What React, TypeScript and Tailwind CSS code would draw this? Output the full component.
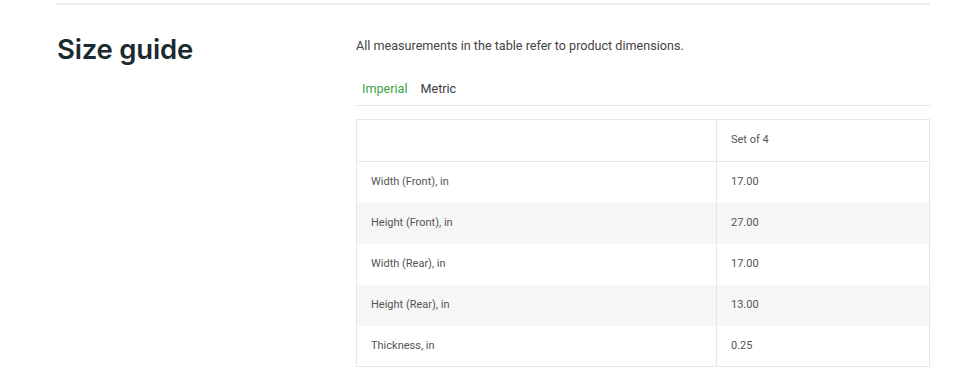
const rows = [
  { label: "Width (Front), in", value: "17.00" },
  { label: "Height (Front), in", value: "27.00" },
  { label: "Width (Rear), in", value: "17.00" },
  { label: "Height (Rear), in", value: "13.00" },
  { label: "Thickness, in", value: "0.25" },
];

export default function App() {
  return (
    <div className="w-[960px] h-[385px] bg-white font-['Roboto',sans-serif] overflow-hidden">
      <div className="ml-[56px] mr-[30px] pt-[3px]">
        <div className="border-t-2 border-[#ececec]" />
        <div className="flex pt-[26px]">
          <h2 className="w-[300px] pl-px font-['Inter',sans-serif] text-[27.5px] leading-[36px] font-semibold tracking-[-0.2px] text-[#1b2a2e]">
            Size guide
          </h2>
          <div className="flex-1">
            <p className="mt-[7px] text-[12.6px] leading-[16px] text-[#444]">
              All measurements in the table refer to product dimensions.
            </p>
            {/* unit tabs */}
            <div className="mt-[27px] flex gap-[13px] pl-[6px] pb-[8px] border-b border-[#e6e6e6] text-[12.6px] leading-[16px]">
              <button className="text-[#3aa24a]">Imperial</button>
              <button className="text-[#3a3a3a]">Metric</button>
            </div>
            <table className="mt-[13px] w-[574px] border border-[#e8e8e8] text-[11px] text-[#555] border-collapse">
              <tbody>
                <tr className="h-[42px] border-b border-[#e8e8e8]">
                  <td className="w-[360px] border-r border-[#e8e8e8] pl-[14px]"></td>
                  <td className="pl-[14px]">Set of 4</td>
                </tr>
                {rows.map((r, i) => (
                  <tr
                    key={r.label}
                    className={i % 2 === 1 ? "h-[41px] bg-[#f6f6f6]" : "h-[41px] bg-white"}
                  >
                    <td className="border-r border-[#e8e8e8] pl-[14px]">{r.label}</td>
                    <td className="pl-[14px]">{r.value}</td>
                  </tr>
                ))}
              </tbody>
            </table>
          </div>
        </div>
      </div>
    </div>
  );
}
